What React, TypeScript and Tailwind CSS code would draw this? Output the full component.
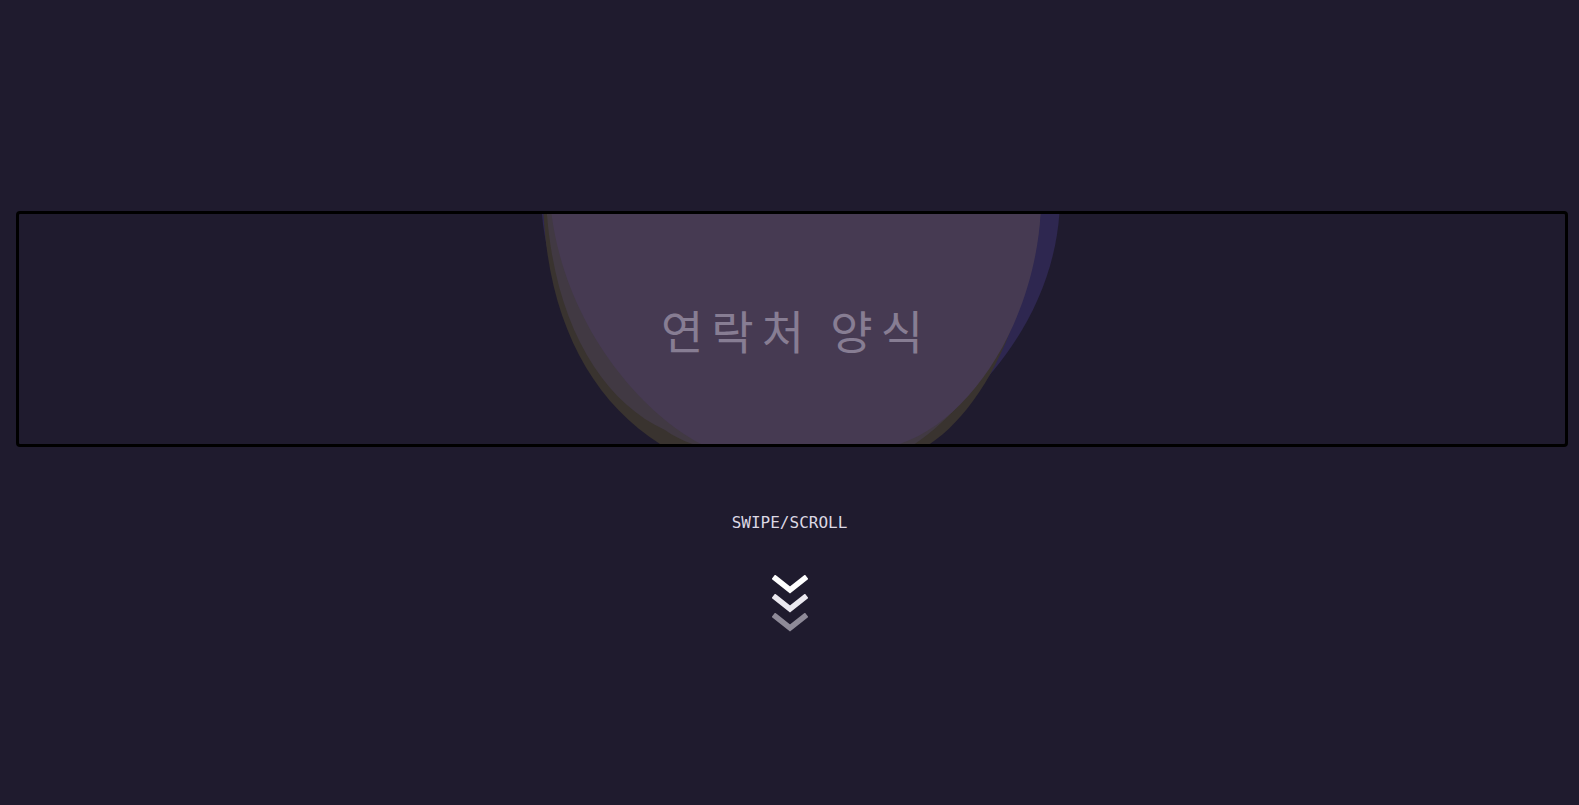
const Chevron = ({ className }: { className: string }) => (
  <svg width="36" height="20" viewBox="0 0 36 20" className={className} fill="none">
    <path d="M3.5 3.5 L18 15 L32.5 3.5" stroke="currentColor" strokeWidth="5.5" strokeLinecap="square" strokeLinejoin="miter" />
  </svg>
);

// decorative blob behind the title, drawn in page coordinates
const Blob = () => (
  <svg className="absolute left-0 top-0" width="1546" height="230" viewBox="19 214 1546 230">
    <path d="M541 200 C545 300 600 380 700 440 L900 450 C970 410 1058 320 1060 200 Z" fill="#2e2750" />
    <path d="M543 200 C546 330 600 420 690 460 C760 485 860 480 920 450 C975 420 1030 330 1036 200 Z" fill="#39332f" />
    <path d="M546 200 C552 320 600 400 665 430 C720 470 880 470 905 450 C955 422 1038 330 1041 200 Z" fill="#413943" />
    <path d="M550 200 C560 320 640 415 707 447 C735 462 860 462 890 447 C975 425 1040 310 1041 200 Z" fill="#463a52" />
  </svg>
);

export default function App() {
  return (
    <div className="min-h-screen w-full bg-[#1f1b2e] pt-[211px] flex flex-col">
      <section className="relative ml-4 mr-[11px] h-[236px] overflow-hidden rounded-[4px] border-[3px] border-black">
        <Blob />
        <div className="relative flex h-full items-center justify-center">
          <h1 className="pl-[8px] text-[46px] leading-none font-normal tracking-[8px] text-[#877d93] [font-family:'Noto_Sans_CJK_KR','Noto_Sans',sans-serif]">
            연락처 양식
          </h1>
        </div>
      </section>

      <div className="mt-[66px] flex flex-col items-center">
        <p className="text-[16px] leading-5 tracking-normal text-[#dcd8e4] [font-family:'DejaVu_Sans_Mono',monospace]">
          SWIPE/SCROLL
        </p>
        <div className="mt-[42px] flex flex-col items-center">
          <Chevron className="text-white" />
          <Chevron className="-mt-[1px] text-[#ebe9f0]" />
          <Chevron className="-mt-[1px] text-[#8e8a98]" />
        </div>
      </div>
    </div>
  );
}
